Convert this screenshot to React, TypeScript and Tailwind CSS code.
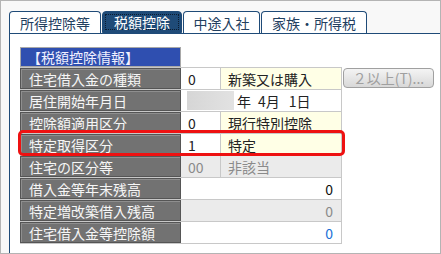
import React from "react";

const font = { fontFamily: '"Noto Sans CJK JP", "Noto Sans", sans-serif' };

const tabs = [
    { label: "所得控除等", w: "w-[92px]", active: false },
    { label: "税額控除", w: "w-[80px]", active: true },
    { label: "中途入社", w: "w-[77px]", active: false },
    { label: "家族・所得税", w: "w-[106px]", active: false },
];

const Label: React.FC<{ text: string }> = ({ text }) => (
    <div className="w-[161px] h-full flex items-center pl-[8px] bg-[#727272] border border-[#555555] shadow-[inset_1px_1px_0_#8e8e8e] text-[#f6f6f6] text-[14px] leading-none">
        {text}
    </div>
);

const App: React.FC = () => {
    return (
        <div
            className="w-[441px] h-[254px] bg-[#f8f8f8] border border-[#b4b4b4] flex flex-col overflow-hidden"
            style={font}
        >
            {/* tab strip */}
            <div className="flex gap-[1px] pl-[8px] pt-[10px] h-[32px]">
                {tabs.map((t) =>
                    t.active ? (
                        <div
                            key={t.label}
                            className={`${t.w} h-[22px] rounded-t-[4px] bg-[#1f4b78] border border-[#1f4b78] p-[2px]`}
                        >
                            <div className="w-full h-full flex items-center justify-center border border-dotted border-[#0b1c30] text-white text-[14px] leading-none">
                                {t.label}
                            </div>
                        </div>
                    ) : (
                        <div
                            key={t.label}
                            className={`${t.w} h-[22px] rounded-t-[4px] bg-white border border-b-0 border-[#1f4b78] flex items-center justify-center text-[#23405f] text-[14px] leading-none`}
                        >
                            {t.label}
                        </div>
                    )
                )}
            </div>

            {/* panel */}
            <div className="relative ml-[8px] flex-1 bg-white border-l border-t border-[#1f4b78] pl-[10px] pt-[13px]">
                <div className="w-[161px] h-[20px] flex items-center pl-[6px] bg-[#2f4fb0] border border-[#a8a8a8] text-[#f0f0ff] text-[14px] leading-none">
                    【税額控除情報】
                </div>

                <div className="w-[322px] text-[14px] leading-none">
                    {/* 住宅借入金の種類 */}
                    <div className="h-[22px] flex border-t border-[#c8c8c8] relative">
                        <Label text="住宅借入金の種類" />
                        <div className="w-[40px] flex items-center pl-[7px] border-r border-[#c8c8c8] text-[#222]">0</div>
                        <div className="w-[121px] flex items-center pl-[7px] bg-[#ffffe6] border-r border-[#c8c8c8] text-[#222]">新築又は購入</div>
                        <div className="absolute left-[322px] top-0 ml-[1px] w-[91px] h-[20px] rounded-[4px] border border-[#a0a0a0] bg-gradient-to-b from-[#f4f4f4] to-[#d8d8d8] flex items-center justify-center text-[#a0a0a0] text-[14px] leading-none">
                            ２以上(T)...
                        </div>
                    </div>

                    {/* 居住開始年月日 */}
                    <div className="h-[22px] flex border-t border-[#c8c8c8]">
                        <Label text="居住開始年月日" />
                        <div className="w-[161px] flex items-center pl-[6px] border-r border-[#c8c8c8] text-[#222]">
                            <div className="w-[47px] h-[19px] bg-gradient-to-r from-[#d6d6d6] to-[#e2e2e2]" />
                            <span className="ml-[3px]">年</span>
                            <span className="ml-[7px]">4月</span>
                            <span className="ml-[9px]">1日</span>
                        </div>
                    </div>

                    {/* 控除額適用区分 */}
                    <div className="h-[22px] flex border-t border-[#c8c8c8]">
                        <Label text="控除額適用区分" />
                        <div className="w-[40px] flex items-center pl-[7px] border-r border-[#c8c8c8] text-[#222]">0</div>
                        <div className="w-[121px] flex items-center pl-[7px] bg-[#ffffe6] border-r border-[#c8c8c8] text-[#222]">現行特別控除</div>
                    </div>

                    {/* 特定取得区分 */}
                    <div className="h-[22px] flex border-t border-[#c8c8c8]">
                        <Label text="特定取得区分" />
                        <div className="w-[40px] flex items-center pl-[7px] border-r border-[#c8c8c8] text-[#222]">1</div>
                        <div className="w-[121px] flex items-center pl-[7px] bg-[#ffffe6] border-r border-[#c8c8c8] text-[#222]">特定</div>
                    </div>

                    {/* 住宅の区分等 */}
                    <div className="h-[22px] flex border-t border-[#c8c8c8]">
                        <Label text="住宅の区分等" />
                        <div className="w-[40px] flex items-center pl-[7px] bg-[#ebebeb] border-r border-[#c8c8c8] text-[#8a8a8a]">00</div>
                        <div className="w-[121px] flex items-center pl-[7px] bg-[#ebebeb] border-r border-[#c8c8c8] text-[#8a8a8a]">非該当</div>
                    </div>

                    {/* 借入金等年末残高 */}
                    <div className="h-[22px] flex border-t border-[#c8c8c8]">
                        <Label text="借入金等年末残高" />
                        <div className="w-[161px] flex items-center justify-end pr-[8px] border-r border-[#c8c8c8] text-[#111]">0</div>
                    </div>

                    {/* 特定増改築借入残高 */}
                    <div className="h-[22px] flex border-t border-[#c8c8c8]">
                        <Label text="特定増改築借入残高" />
                        <div className="w-[161px] flex items-center justify-end pr-[8px] bg-[#ebebeb] border-r border-[#c8c8c8] text-[#8a8a8a]">0</div>
                    </div>

                    {/* 住宅借入金等控除額 */}
                    <div className="h-[23px] flex border-t border-b border-[#c8c8c8]">
                        <Label text="住宅借入金等控除額" />
                        <div className="w-[161px] flex items-center justify-end pr-[8px] border-r border-[#c8c8c8] text-[#1a6fd6]">0</div>
                    </div>
                </div>

                {/* highlight */}
                <div className="absolute left-[8px] top-[96px] w-[327px] h-[26px] rounded-[5px] border-[3px] border-[#ee1111] pointer-events-none" />
            </div>
        </div>
    );
};

export default App;
